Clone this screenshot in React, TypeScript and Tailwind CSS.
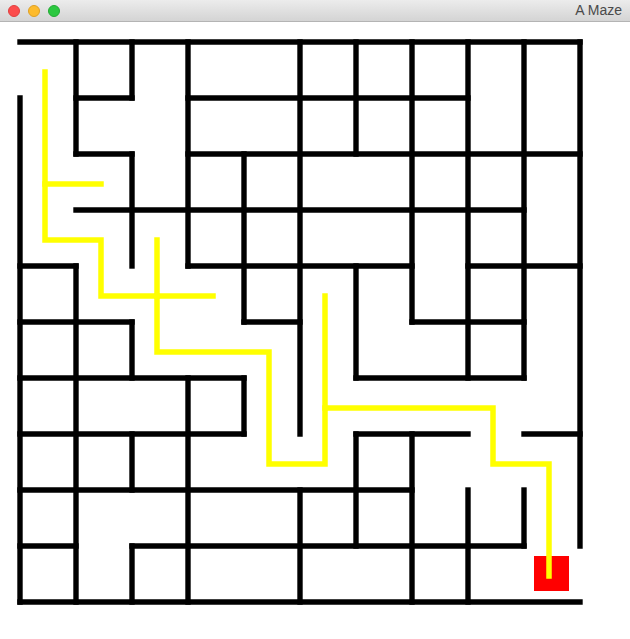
const X = (c: number) => 20 + 56 * c;
const Y = (r: number) => 42 + 56 * r;

// horizontal walls: row -> [fromCol, toCol]
const hWalls: [number, number, number][] = [
  [0, 0, 10],
  [1, 1, 2], [1, 3, 8],
  [2, 1, 2], [2, 3, 10],
  [3, 1, 9],
  [4, 0, 1], [4, 3, 7], [4, 8, 10],
  [5, 0, 2], [5, 4, 5], [5, 7, 9],
  [6, 0, 4], [6, 6, 9],
  [7, 0, 4], [7, 6, 8], [7, 9, 10],
  [8, 0, 7],
  [9, 0, 1], [9, 2, 9],
  [10, 0, 10],
];

// vertical walls: col -> [fromRow, toRow]
const vWalls: [number, number, number][] = [
  [0, 1, 10],
  [1, 0, 2], [1, 4, 10],
  [2, 0, 1], [2, 2, 4], [2, 5, 6], [2, 7, 8], [2, 9, 10],
  [3, 0, 4], [3, 6, 10],
  [4, 2, 5], [4, 6, 7],
  [5, 0, 7], [5, 8, 10],
  [6, 0, 2], [6, 4, 6], [6, 7, 9],
  [7, 0, 5], [7, 7, 10],
  [8, 0, 6], [8, 8, 10],
  [9, 0, 6], [9, 8, 9],
  [10, 0, 9],
];

// path runs through cell centres
const P = (c: number, r: number) => `${45 + 56 * c},${72 + 56 * r}`;

const trail = [
  [P(0, 0), P(0, 3), P(1, 3), P(1, 4), P(2, 4), P(2, 5), P(4, 5), P(4, 7), P(5, 7), P(5, 6), P(8, 6), P(8, 7), P(9, 7), P(9, 9)],
  [P(0, 2), P(1, 2)],
  [P(2, 4), P(2, 3)],
  [P(2, 4), P(3, 4)],
  [P(5, 6), P(5, 4)],
];

function TitleBar() {
  return (
    <div className="h-[22px] flex items-center px-2 border-b border-[#b4b4b4] bg-gradient-to-b from-[#ececec] to-[#d4d4d4]">
      <div className="flex gap-2">
        <span className="w-3 h-3 rounded-full bg-[#fc4c4c] border border-[#e0403f]" />
        <span className="w-3 h-3 rounded-full bg-[#fdbb2d] border border-[#dea024]" />
        <span className="w-3 h-3 rounded-full bg-[#2bc840] border border-[#22aa33]" />
      </div>
      <div className="ml-auto text-[14px] text-[#4a4a4a] font-['Liberation_Sans',Arial,sans-serif]">A Maze</div>
    </div>
  );
}

export default function App() {
  return (
    <div className="w-[630px] h-[639px] flex flex-col bg-white overflow-hidden">
      <TitleBar />
      <svg width={630} height={617} viewBox="0 22 630 617" className="block">
        <g stroke="#000" strokeWidth={5.4} strokeLinecap="square">
          {hWalls.map(([r, a, b], i) => (
            <line key={"h" + i} x1={X(a)} y1={Y(r)} x2={X(b)} y2={Y(r)} />
          ))}
          {vWalls.map(([c, a, b], i) => (
            <line key={"v" + i} x1={X(c)} y1={Y(a)} x2={X(c)} y2={Y(b)} />
          ))}
        </g>
        <rect x={534} y={556} width={35} height={35} fill="#ff0000" />
        <g stroke="#ffff00" strokeWidth={5.5} strokeLinecap="square" fill="none">
          {trail.map((pts, i) => (
            <polyline key={i} points={pts.join(" ")} />
          ))}
        </g>
      </svg>
    </div>
  );
}
